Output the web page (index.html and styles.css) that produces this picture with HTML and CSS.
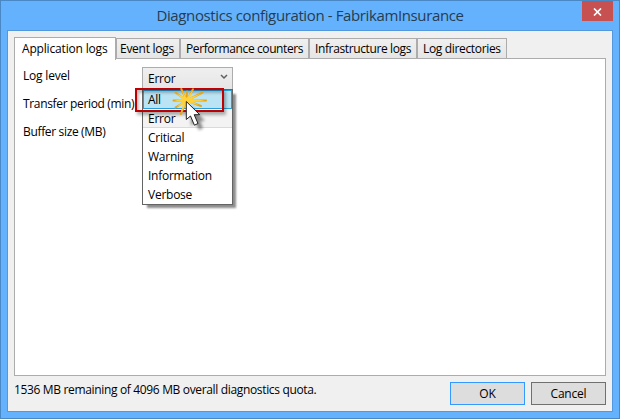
FILE: index.html
```html
<!DOCTYPE html>
<html lang="en">
<head>
<meta charset="utf-8">
<title>Diagnostics configuration - FabrikamInsurance</title>
<link rel="stylesheet" href="styles.css">
</head>
<body>
<div class="window">
  <header class="titlebar">
    <h1 class="title">Diagnostics configuration - FabrikamInsurance</h1>
    <button class="close" aria-label="Close"><svg width="9" height="8" viewBox="0 0 9 8"><path d="M1 .5 8 7.5M8 .5 1 7.5" stroke="#fff" stroke-width="1.7"/></svg></button>
  </header>
  <main class="client">
    <nav class="tabs">
      <div class="tab tab-active">Application logs</div>
      <div class="tab tab-event">Event logs</div>
      <div class="tab tab-perf">Performance counters</div>
      <div class="tab tab-infra">Infrastructure logs</div>
      <div class="tab tab-dirs">Log directories</div>
    </nav>
    <section class="panel">
      <div class="labels">
        <div class="label label-level">Log level</div>
        <div class="label">Transfer period (min)</div>
        <div class="label">Buffer size (MB)</div>
      </div>
      <div class="combo">
        <div class="combo-value"><span>Error</span><svg width="8" height="6" viewBox="0 0 8 6"><path d="M1 1 4 4 7 1" fill="none" stroke="#606060" stroke-width="1.5"/></svg></div>
        <div class="menu">
          <div class="item item-hover">All</div>
          <div class="item item-current">Error</div>
          <div class="item">Critical</div>
          <div class="item">Warning</div>
          <div class="item">Information</div>
          <div class="item">Verbose</div>
        </div>
        <div class="callout"></div>
        <svg class="pointer" width="50" height="55" viewBox="0 0 50 55">
          <defs><filter id="soft" x="-50%" y="-50%" width="200%" height="200%"><feGaussianBlur stdDeviation="1.6"/></filter></defs>
          <path d="M26 26V46L30 42 34 50 38 48 35 41H40Z" fill="#333" opacity=".55" filter="url(#soft)"/>
          <path d="M21.500 20.500 8.500 20.500M21.500 20.500 10.500 12.500M21.500 20.500 16.300 9M21.500 20.500 22 11.500M21.500 20.500 28 9.300M21.500 20.500 37.500 12.500M21.500 20.500 41 20.500M21.500 20.500 36 26M21.500 20.500 15.800 34M21.500 20.500 10.500 27.500" stroke="#e3a51d" stroke-width="2" stroke-linecap="round"/>
          <path d="M21.500 18 28 10 25 17.500 36 13.500 27 19 40 20.500 28 22 34 25 24 23 20 26 16 33 18 24.500 11.500 27 17 22 9.500 20.500 17 19 11.500 13.500 19 17 17 10.500Z" fill="#fdd23c"/>
          <path d="M21.300 21.500V39.500L25.500 36 29.400 45.200 33 43.500 29.200 34.700H34.700Z" fill="#fff" stroke="#222" stroke-width="1"/>
        </svg>
      </div>
    </section>
    <footer class="footer">
      <div class="quota">1536 MB remaining of 4096 MB overall diagnostics quota.</div>
      <button class="button button-ok">OK</button>
      <button class="button">Cancel</button>
    </footer>
  </main>
</div>
</body>
</html>
```
FILE: styles.css
```css
* { box-sizing: border-box; }
body {
  margin: 0;
  font-family: "Open Sans", "Noto Sans", sans-serif;
  font-size: 12px;
  letter-spacing: -0.34px;
  line-height: 16px;
  color: #000;
  white-space: nowrap;
}
.window {
  width: 620px;
  height: 419px;
  border: 1px solid #4a87c5;
  background: #64b2fd;
  padding: 0 6px 6px;
  display: flex;
  flex-direction: column;
}
.titlebar {
  height: 29px;
  position: relative;
  display: flex;
  justify-content: center;
}
.title {
  margin: 3px 0 0;
  font-size: 15px;
  line-height: 22px;
  font-weight: 400;
  letter-spacing: -0.38px;
  color: #263c50;
}
.close {
  position: absolute;
  right: 0;
  top: 0;
  width: 31px;
  height: 20px;
  border: 0;
  padding: 2px 0 0;
  background: #c75050;
  display: flex;
  align-items: center;
  justify-content: center;
}
.client {
  height: 382px;
  border: 1px solid #5398dc;
  background: #f0f0f0;
  padding: 6px 6px 0;
}
.tabs { height: 21px; display: flex; align-items: flex-end; }
.tab {
  height: 20px;
  border: 1px solid #acacac;
  border-bottom: 0;
  background: linear-gradient(#f0f0f0, #e5e5e5);
  padding: 2px 0 0 5px;
}
.tab-active {
  width: 102px;
  height: 23px;
  margin-bottom: -2px;
  padding: 3px 0 0 7px;
  background: #fff;
  letter-spacing: -0.17px;
  position: relative;
}
.tab-event { width: 64px; padding-left: 3px; letter-spacing: -0.27px; }
.tab-perf { width: 129px; letter-spacing: -0.4px; }
.tab-infra { width: 108px; letter-spacing: -0.38px; }
.tab-dirs { width: 90px; }
.panel {
  height: 318px;
  border: 1px solid #acacac;
  background: #fff;
  display: flex;
  padding: 8px;
}
.labels { width: 119px; padding-top: 1px; }
.label { height: 28px; }
.label-level { letter-spacing: -0.2px; }
.combo { position: relative; width: 91px; height: 23px; letter-spacing: -0.25px; }
.combo-value {
  height: 23px;
  border: 1px solid #acacac;
  background: linear-gradient(#f0f0f0, #e5e5e5);
  display: flex;
  align-items: center;
  justify-content: space-between;
  padding: 0 4px 0 5px;
}
.combo-value svg { margin-bottom: 3px; }
.menu {
  position: absolute;
  top: 22px;
  left: 0;
  width: 91px;
  height: 116px;
  border: 1px solid #646464;
  background: #fff;
  box-shadow: 4px 4px 2px -1px rgba(0,0,0,.45);
}
.item { height: 19px; padding: 2px 5px 0; }
.item-hover { border: 1px solid #26a0da; background: #bae3f3; padding: 1px 4px 0; }
.item-current { background: #f3f3f3; border-bottom: 1px solid #dadada; }
.callout {
  position: absolute;
  left: -7px;
  top: 21px;
  width: 89px;
  height: 24px;
  border: 2px solid #c00000;
  box-shadow: 2px 3px 3px rgba(0,0,0,.3), inset 2px 3px 3px rgba(0,0,0,.25);
}
.pointer { position: absolute; left: 23px; top: 13px; }
.footer { display: flex; padding-top: 6px; }
.quota { flex: 1; }
.button {
  width: 75px;
  height: 23px;
  margin-left: 6px;
  padding: 1px 0 0;
  border: 1px solid #707070;
  background: #ddd;
  font: inherit;
  letter-spacing: -0.2px;
}
.button-ok { border-color: #3399ff; }
```
